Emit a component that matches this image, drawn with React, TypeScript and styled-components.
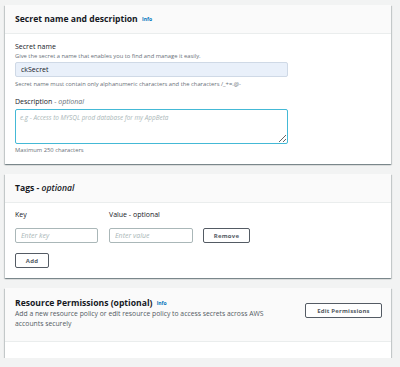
import styled, { createGlobalStyle } from 'styled-components'

const GlobalStyle = createGlobalStyle`
  html, body {
    margin: 0;
    padding: 0;
    background: #f2f3f3;
    font-family: "Open Sans", "Liberation Sans", sans-serif;
    color: #16191f;
  }
`

const Page = styled.main`
  display: flex;
  flex-direction: column;
  gap: 10px;
  padding: 5px 9px 0 5px;
  width: 400px;
  box-sizing: border-box;
`

const Card = styled.section`
  background: #fff;
  box-shadow: 0 1px 1px 0 rgba(0, 28, 36, 0.3), 1px 1px 1px 0 rgba(0, 28, 36, 0.15),
    -1px 1px 1px 0 rgba(0, 28, 36, 0.15);
`

const CardHeader = styled.header`
  display: flex;
  align-items: center;
  height: 29px;
  padding: 0 10px;
  background: #fafafa;
  border-bottom: 1px solid #eaeded;
  box-sizing: border-box;
`

const Title = styled.h2`
  margin: 0;
  font-size: 8.6px;
  font-weight: 700;
  line-height: 12px;
  color: #16191f;

  em {
    font-weight: 600;
  }
`

const Info = styled.a`
  margin-left: 2px;
  font-size: 5px;
  font-weight: 700;
  color: #0073bb;
  text-decoration: none;
  vertical-align: 1px;
`

const Body = styled.div<{ $pad?: string }>`
  padding: ${(p) => p.$pad ?? '8px 10px 10px'};
  display: flex;
  flex-direction: column;
  font-size: 7px;
  line-height: 10px;
`

const Label = styled.label<{ $mt?: number }>`
  display: block;
  margin-top: ${(p) => p.$mt ?? 0}px;
  font-size: 7px;
  line-height: 10px;
  color: #16191f;

  i {
    color: #687078;
  }
`

const Hint = styled.div<{ $mt?: number }>`
  font-size: 5.8px;
  line-height: 8px;
  color: #687078;
  margin-top: ${(p) => p.$mt ?? 0}px;
  white-space: nowrap;
`

const TextInput = styled.input<{ $w: number; $filled?: boolean }>`
  box-sizing: border-box;
  width: ${(p) => p.$w}px;
  height: 15px;
  margin: 0;
  padding: 0 5px;
  border: 1px solid ${(p) => (p.$filled ? '#cfd9e6' : '#aab7b8')};
  border-radius: 2px;
  background: ${(p) => (p.$filled ? '#e9f0fa' : '#fff')};
  font-family: inherit;
  font-size: 7px;
  color: #16191f;
  outline: none;

  &::placeholder {
    color: #aab7b8;
    font-style: italic;
  }
`

const TextArea = styled.textarea`
  box-sizing: border-box;
  width: 273px;
  height: 35px;
  margin: 2px 0 0;
  padding: 3px 4px;
  border: 1.5px solid #44b9d6;
  border-radius: 2px;
  font-family: inherit;
  font-size: 6.4px;
  resize: vertical;
  outline: none;

  &::placeholder {
    color: #aab7b8;
    font-style: italic;
  }
`

const Row = styled.div<{ $gap: number; $mt?: number }>`
  display: flex;
  align-items: center;
  gap: ${(p) => p.$gap}px;
  margin-top: ${(p) => p.$mt ?? 0}px;
`

const Column = styled.div<{ $w: number }>`
  width: ${(p) => p.$w}px;
`

const Button = styled.button<{ $w: number }>`
  box-sizing: border-box;
  width: ${(p) => p.$w}px;
  height: 15px;
  padding: 0;
  border: 1px solid #545b64;
  border-radius: 2px;
  background: #fff;
  font-family: inherit;
  font-size: 6px;
  font-weight: 700;
  color: #545b64;
  letter-spacing: 0.2px;
`

const PermHeader = styled.div`
  display: flex;
  align-items: flex-start;
  justify-content: space-between;
  height: 54px;
  padding: 9px 9px 0 10px;
  box-sizing: border-box;
  background: #fafafa;
  border-bottom: 1px solid #eaeded;
`

const PermText = styled.p`
  margin: 0;
  width: 255px;
  font-size: 6.8px;
  line-height: 10px;
  color: #545b64;
`

const PermButton = styled(Button)`
  margin-top: 6px;
`

const PermFooter = styled.div`
  height: 16px;
`

export default function App() {
  return (
    <>
      <GlobalStyle />
      <Page>
        <Card>
          <CardHeader>
            <Title>
              Secret name and description <Info>Info</Info>
            </Title>
          </CardHeader>
          <Body>
            <Label>Secret name</Label>
            <Hint>Give the secret a name that enables you to find and manage it easily.</Hint>
            <Row $gap={0} $mt={2}>
              <TextInput $w={273} $filled defaultValue="ckSecret" />
            </Row>
            <Hint $mt={3}>
              Secret name must contain only alphanumeric characters and the characters /_+=.@-
            </Hint>
            <Label $mt={9}>
              Description <i>- optional</i>
            </Label>
            <TextArea placeholder="e.g - Access to MYSQL prod database for my AppBeta" />
            <Hint $mt={2}>Maximum 250 characters</Hint>
          </Body>
        </Card>

        <Card>
          <CardHeader>
            <Title>
              Tags - <em><i>optional</i></em>
            </Title>
          </CardHeader>
          <Body $pad="7px 10px 10px">
            <Row $gap={11}>
              <Column $w={83}>
                <Label>Key</Label>
              </Column>
              <Column $w={84}>
                <Label>Value - optional</Label>
              </Column>
            </Row>
            <Row $gap={10} $mt={8}>
              <TextInput $w={83} placeholder="Enter key" />
              <TextInput $w={84} placeholder="Enter value" style={{ marginLeft: 1 }} />
              <Button $w={47}>Remove</Button>
            </Row>
            <Row $gap={0} $mt={10}>
              <Button $w={34}>Add</Button>
            </Row>
          </Body>
        </Card>

        <Card>
          <PermHeader>
            <div>
              <Title>
                Resource Permissions (optional) <Info>Info</Info>
              </Title>
              <PermText>
                Add a new resource policy or edit resource policy to access secrets across AWS
                accounts securely
              </PermText>
            </div>
            <PermButton $w={77}>Edit Permissions</PermButton>
          </PermHeader>
          <PermFooter />
        </Card>
      </Page>
    </>
  )
}
